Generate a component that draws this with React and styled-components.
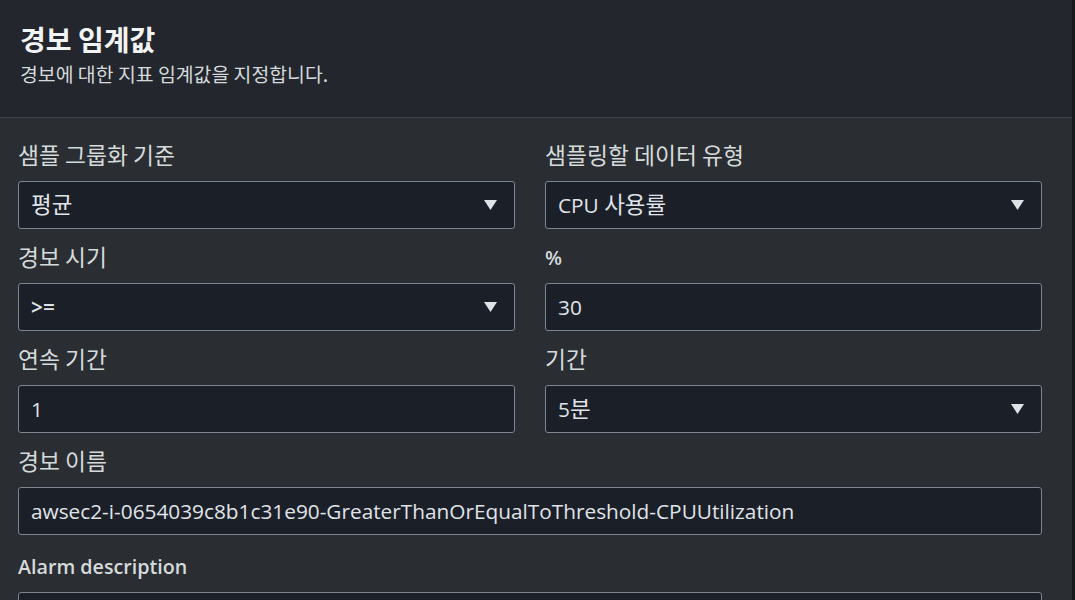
import React from "react";
import styled, { createGlobalStyle } from "styled-components";

const Global = createGlobalStyle`
  html, body { margin: 0; padding: 0; background: #2a2d32; }
  body { font-family: "Open Sans", "Noto Sans CJK KR", sans-serif; }
  * { box-sizing: border-box; }
`;

const Panel = styled.div`
  width: 1075px;
  height: 600px;
  overflow: hidden;
  background: #2a2d32;
  border-right: 3px solid #16191e;
`;

const Header = styled.header`
  background: #23262d;
  border-bottom: 1px solid #40444b;
  height: 118px;
  padding: 24px 20px 0;
`;

const Title = styled.h2`
  margin: 0;
  font-family: "Noto Sans CJK KR", sans-serif;
  font-size: 28px;
  line-height: 30px;
  font-weight: 700;
  color: #f2f3f3;
`;

const Subtitle = styled.p`
  margin: 8px 0 0;
  font-family: "Noto Sans CJK KR", sans-serif;
  font-size: 19.4px;
  line-height: 24px;
  color: #d5dbdb;
`;

const Body = styled.div`
  padding: 26px 30px 0 18px;
  display: grid;
  grid-template-columns: 1fr 1fr;
  column-gap: 30px;
  row-gap: 17px;
`;

const Field = styled.div`
  display: flex;
  flex-direction: column;
  gap: 13px;
  grid-column: ${(p) => (p.$full ? "1 / -1" : "auto")};
  margin-top: ${(p) => p.$extra || 0}px;
`;

const Label = styled.label`
  display: block;
  height: 24px;
  font-size: ${(p) => (p.$strong ? 19.7 : 19.5)}px;
  line-height: 24px;
  color: #d5dbdb;
  white-space: nowrap;
  font-weight: ${(p) => (p.$strong ? 600 : 400)};
`;

const Box = styled.div`
  height: 48px;
  border: 1px solid #7d8590;
  border-radius: 3px;
  background: #1a1f28;
  display: flex;
  align-items: center;
  justify-content: space-between;
  padding: 0 16px 0 12px;
  font-size: 20.8px;
  line-height: 26px;
  color: #e0e4e8;
  white-space: nowrap;
`;

const Value = styled.span`
  display: block;
  height: 26px;
  font-weight: ${(p) => (p.$strong ? 600 : 400)};
`;

const Ko = styled.span`
  font-family: "Noto Sans CJK KR", sans-serif;
  font-size: ${(p) => p.$scale}em;
  line-height: 1;
`;

const Mixed = ({ text, scale }) =>
  text.split(/([\uAC00-\uD7A3]+)/).map((part, i) =>
    /[\uAC00-\uD7A3]/.test(part) ? (
      <Ko key={i} $scale={scale}>
        {part}
      </Ko>
    ) : (
      part
    )
  );

const Caret = () => (
  <svg width="15" height="12" viewBox="0 0 15 12" aria-hidden="true">
    <path d="M1 1 H14 L7.5 11 Z" fill="#dfe3e6" />
  </svg>
);

const fields = [
  { label: "샘플 그룹화 기준", value: "평균", select: true },
  { label: "샘플링할 데이터 유형", value: "CPU 사용률", select: true },
  { label: "경보 시기", value: ">=", select: true, strongValue: true },
  { label: "%", value: "30", strongLabel: true },
  { label: "연속 기간", value: "1" },
  { label: "기간", value: "5분", select: true },
  {
    label: "경보 이름",
    value: "awsec2-i-0654039c8b1c31e90-GreaterThanOrEqualToThreshold-CPUUtilization",
    full: true,
  },
  { label: "Alarm description", value: "", full: true, strongLabel: true, extra: 3 },
];

export default function App() {
  return (
    <>
      <Global />
      <Panel>
        <Header>
          <Title>경보 임계값</Title>
          <Subtitle>경보에 대한 지표 임계값을 지정합니다.</Subtitle>
        </Header>
        <Body>
          {fields.map((f) => (
            <Field key={f.label} $full={f.full} $extra={f.extra}>
              <Label $strong={f.strongLabel}>
                <Mixed text={f.label} scale={1.17} />
              </Label>
              <Box>
                <Value $strong={f.strongValue}>
                  <Mixed text={f.value} scale={1.08} />
                </Value>
                {f.select && <Caret />}
              </Box>
            </Field>
          ))}
        </Body>
      </Panel>
    </>
  );
}
